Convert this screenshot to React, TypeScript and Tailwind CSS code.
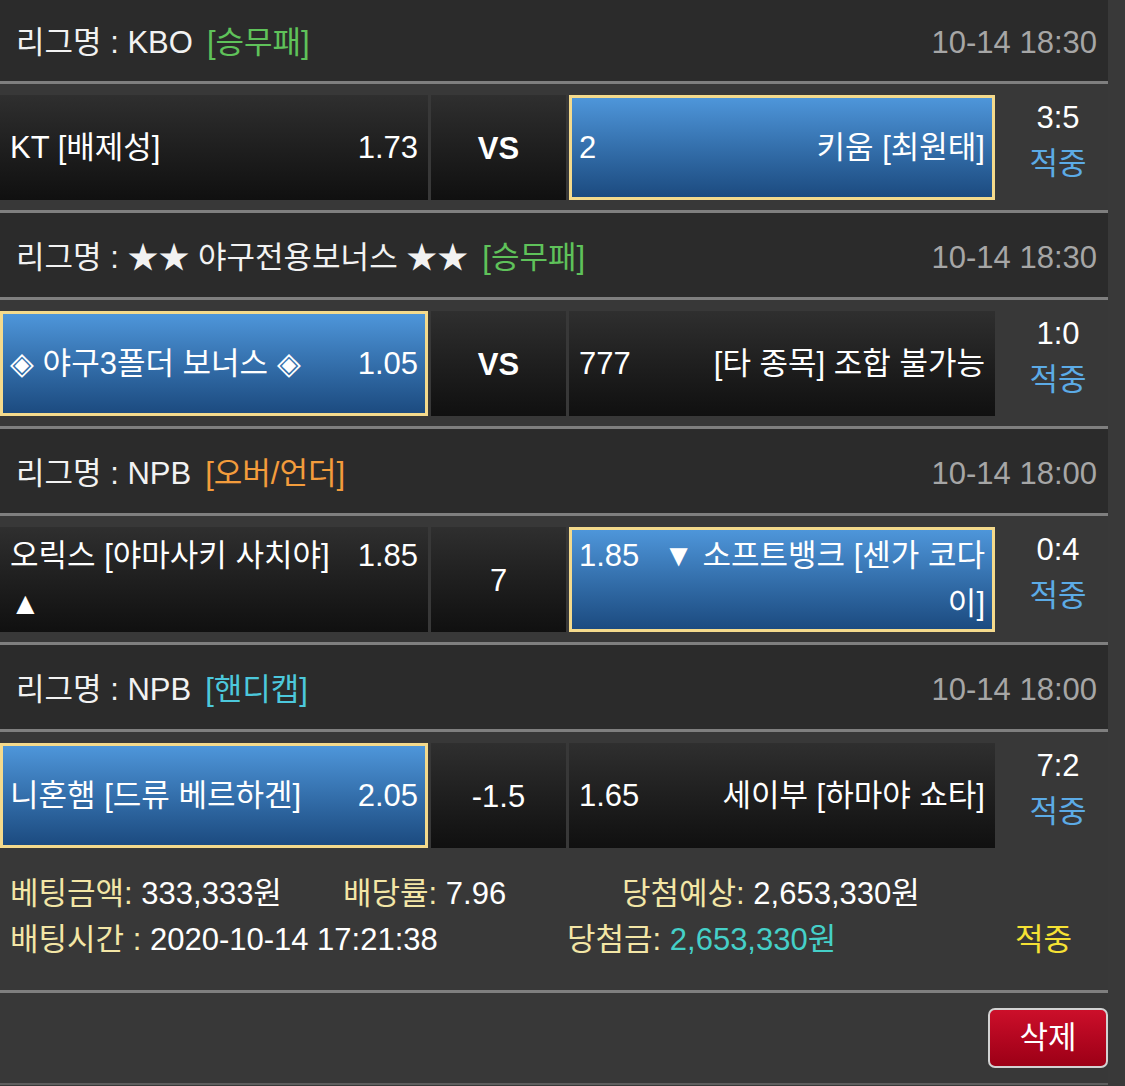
import React from "react";

type Side = "home" | "away" | null;

type Match = {
  league: string;
  kind: string;
  kindColor: string;
  date: string;
  home: string;
  homeOdds: string;
  mid: string;
  midBold?: boolean;
  away: string;
  awayOdds: string;
  picked: Side;
  score: string;
};

const MATCHES: Match[] = [
  {
    league: "KBO",
    kind: "[승무패]",
    kindColor: "text-[#5fc25a]",
    date: "10-14 18:30",
    home: "KT [배제성]",
    homeOdds: "1.73",
    mid: "VS",
    midBold: true,
    away: "키움 [최원태]",
    awayOdds: "2",
    picked: "away",
    score: "3:5",
  },
  {
    league: "★★ 야구전용보너스 ★★",
    kind: "[승무패]",
    kindColor: "text-[#5fc25a]",
    date: "10-14 18:30",
    home: "◈ 야구3폴더 보너스 ◈",
    homeOdds: "1.05",
    mid: "VS",
    midBold: true,
    away: "[타 종목] 조합 불가능",
    awayOdds: "777",
    picked: "home",
    score: "1:0",
  },
  {
    league: "NPB",
    kind: "[오버/언더]",
    kindColor: "text-[#f39c3c]",
    date: "10-14 18:00",
    home: "오릭스 [야마사키 사치야] ▲",
    homeOdds: "1.85",
    mid: "7",
    away: "▼ 소프트뱅크 [센가 코다이]",
    awayOdds: "1.85",
    picked: "away",
    score: "0:4",
  },
  {
    league: "NPB",
    kind: "[핸디캡]",
    kindColor: "text-[#4cc8dc]",
    date: "10-14 18:00",
    home: "니혼햄 [드류 베르하겐]",
    homeOdds: "2.05",
    mid: "-1.5",
    away: "세이부 [하마야 쇼타]",
    awayOdds: "1.65",
    picked: "home",
    score: "7:2",
  },
];

const DARK = "bg-gradient-to-b from-[#2f2f2f] to-[#101010] px-[10px]";
const PICKED = "bg-gradient-to-b from-[#4e96da] to-[#1c4b80] border-[3px] border-[#f4da8c] px-[7px]";

function Line() {
  return <div className="h-[3px] bg-[#7f7f7f]" />;
}

function Header({ m, first }: { m: Match; first?: boolean }) {
  return (
    <div className={`flex items-center justify-between bg-[#2b2b2b] pl-[16px] pr-[11px] pt-[6px] ${first ? "h-[81px]" : "h-[84px]"}`}>
      <div className="text-[#f2f2f2]">
        리그명 : {m.league}
        <span className={`ml-[14px] ${m.kindColor}`}>{m.kind}</span>
      </div>
      <div className="text-[#a6a6a6]">{m.date}</div>
    </div>
  );
}

function MatchRow({ m }: { m: Match }) {
  return (
    <div className="grid grid-cols-[428px_135px_426px_1fr] gap-[3px] bg-[#383838] pt-[11px] pb-[10px]">
      {/* home: odds float right, name flows left */}
      <div className={`flex h-[105px] items-center text-white ${m.picked === "home" ? PICKED : DARK}`}>
        <div className="flow-root w-full leading-[48px]">
          <span className="float-right pl-[8px]">{m.homeOdds}</span>
          {m.home}
        </div>
      </div>
      <div className={`flex h-[105px] items-center justify-center pt-[3px] text-white ${DARK} ${m.midBold ? "font-bold" : ""}`}>
        {m.mid}
      </div>
      {/* away: odds float left, name flows right */}
      <div className={`flex h-[105px] items-center text-white ${m.picked === "away" ? PICKED : DARK}`}>
        <div className="flow-root w-full text-right leading-[48px]">
          <span className="float-left pr-[10px]">{m.awayOdds}</span>
          {m.away}
        </div>
      </div>
      <div className="flex h-[105px] flex-col items-center justify-center pb-[14px] pl-[10px] leading-[46px]">
        <span className="text-white">{m.score}</span>
        <span className="text-[#5cabe6]">적중</span>
      </div>
    </div>
  );
}

export default function App() {
  return (
    <div className="min-h-[1086px] w-[1125px] bg-[#393939] font-['Liberation_Sans','Noto_Sans_CJK_KR',sans-serif] text-[31px]">
      <div className="w-[1108px]">
        {MATCHES.map((m, i) => (
          <div key={i}>
            <Header m={m} first={i === 0} />
            <Line />
            <MatchRow m={m} />
            {i < MATCHES.length - 1 && <Line />}
          </div>
        ))}

        <div className="bg-[#383838] pb-[27px] pl-[10px] pt-[13px] leading-[46px]">
          <div className="flex">
            <div className="w-[333px]">
              <span className="text-[#f3e6a6]">베팅금액: </span>
              <span className="text-white">333,333원</span>
            </div>
            <div className="w-[279px]">
              <span className="text-[#f3e6a6]">배당률: </span>
              <span className="text-white">7.96</span>
            </div>
            <div>
              <span className="text-[#f3e6a6]">당첨예상: </span>
              <span className="text-white">2,653,330원</span>
            </div>
          </div>
          <div className="flex">
            <div className="w-[557px]">
              <span className="text-[#f3e6a6]">배팅시간 : </span>
              <span className="text-white">2020-10-14 17:21:38</span>
            </div>
            <div className="w-[448px]">
              <span className="text-[#f3e6a6]">당첨금: </span>
              <span className="text-[#45d0c8]">2,653,330원</span>
            </div>
            <div className="text-[#f6e234]">적중</div>
          </div>
        </div>
        <Line />
        <div className="flex justify-end bg-[#383838] pb-[15px] pt-[15px]">
          <button
            type="button"
            className="flex h-[60px] w-[120px] items-center justify-center rounded-[7px] border-2 border-[#d2d2d2] bg-gradient-to-b from-[#cc0f2a] to-[#9c0016] text-white"
          >
            삭제
          </button>
        </div>
        <div className="h-[2px] bg-[#5e5e5e]" />
      </div>
    </div>
  );
}
